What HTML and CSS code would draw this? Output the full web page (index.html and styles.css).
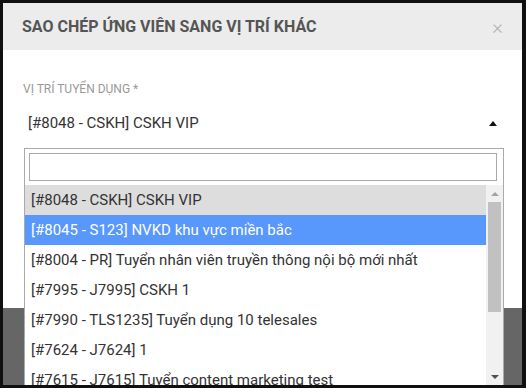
FILE: index.html
```html
<!DOCTYPE html>

<html>
    <head>
        <meta charset="utf-8">

        <link rel="stylesheet" href="styles.css">
    </head>

    <body>
        <div class="screen">
            <div class="modal">
                <div class="modal-head">
                    <div class="title">SAO CHÉP ỨNG VIÊN SANG VỊ TRÍ KHÁC</div>
                    <div class="close">&times;</div>
                </div>

                <div class="modal-body">
                    <div class="label">VỊ TRÍ TUYỂN DỤNG *</div>

                    <div class="choice">
                        <span>[#8048 - CSKH] CSKH VIP</span>
                        <span class="arrow"></span>
                    </div>
                </div>
            </div>

            <div class="dropdown">
                <div class="search">
                    <input type="text" class="search-box">
                </div>

                <div class="scroll-area">
                    <ul class="results">
                        <li class="option selected">[#8048 - CSKH] CSKH VIP</li>
                        <li class="option active">[#8045 - S123] NVKD khu vực miền bắc</li>
                        <li class="option">[#8004 - PR] Tuyển nhân viên truyền thông nội bộ mới nhất</li>
                        <li class="option">[#7995 - J7995] CSKH 1</li>
                        <li class="option">[#7990 - TLS1235] Tuyển dụng 10 telesales</li>
                        <li class="option">[#7624 - J7624] 1</li>
                        <li class="option">[#7615 - J7615] Tuyển content marketing test</li>
                    </ul>

                    <div class="scrollbar">
                        <div class="scroll-btn">
                            <span class="tri-up"></span>
                        </div>

                        <div class="track">
                            <div class="thumb"></div>
                        </div>

                        <div class="scroll-btn">
                            <span class="tri-down"></span>
                        </div>
                    </div>
                </div>
            </div>
        </div>
    </body>
</html>
```

FILE: styles.css
```css
body
{
    margin: 0;
    background: #101010;
    font-family: Roboto, "Liberation Sans", sans-serif;
}

.screen
{
    position: relative;
    margin: 3px 4px 0 3px;
    height: 382px;
    background: #666;
    overflow: hidden;
}

.modal
{
    height: 305px;
    background: #fff;
}

.modal-head
{
    display: flex;
    align-items: center;
    justify-content: space-between;
    height: 47px;
    padding: 0 19px;
    background: #ececec;
}

.title
{
    font-size: 16px;
    font-weight: 700;
    color: #555;
}

.close
{
    font-size: 21px;
    line-height: 22px;
    font-weight: 300;
    color: #b4b4b4;
}

.modal-body
{
    padding: 31px 20px 0 20px;
}

.label
{
    font-size: 12px;
    line-height: 16px;
    color: #999;
}

.choice
{
    display: flex;
    align-items: center;
    justify-content: space-between;
    margin-top: 12px;
    height: 28px;
    padding: 0 5px;
    font-size: 15px;
    color: #333;
}

.arrow
{
    width: 0;
    height: 0;
    border-left: 4px solid transparent;
    border-right: 4px solid transparent;
    border-bottom: 5px solid #111;
}

.dropdown
{
    position: absolute;
    left: 21px;
    top: 145px;
    width: 478px;
    border: 1px solid #aaa;
    background: #fff;
}

.search
{
    padding: 4px;
}

.search-box
{
    display: block;
    box-sizing: border-box;
    width: 468px;
    height: 28px;
    margin: 0;
    border: 1px solid #aaa;
    outline: none;
}

.scroll-area
{
    display: flex;
    height: 200px;
}

.results
{
    flex: 1;
    list-style: none;
    margin: 0;
    padding: 0;
    overflow: hidden;
}

.option
{
    padding: 6px;
    font-size: 15px;
    line-height: 18px;
    color: #333;
    white-space: nowrap;
}

.selected
{
    background: #ddd;
}

.active
{
    background: #5897fb;
    color: #fff;
}

.scrollbar
{
    display: flex;
    flex-direction: column;
    width: 17px;
    background: #f1f1f1;
}

.scroll-btn
{
    display: flex;
    align-items: center;
    justify-content: center;
    height: 17px;
}

.tri-up
{
    border-left: 4px solid transparent;
    border-right: 4px solid transparent;
    border-bottom: 4px solid #a3a3a3;
}

.tri-down
{
    border-left: 4px solid transparent;
    border-right: 4px solid transparent;
    border-top: 4px solid #505050;
}

.track
{
    flex: 1;
}

.thumb
{
    height: 110px;
    margin: 0 2px;
    background: #c1c1c1;
}
```
